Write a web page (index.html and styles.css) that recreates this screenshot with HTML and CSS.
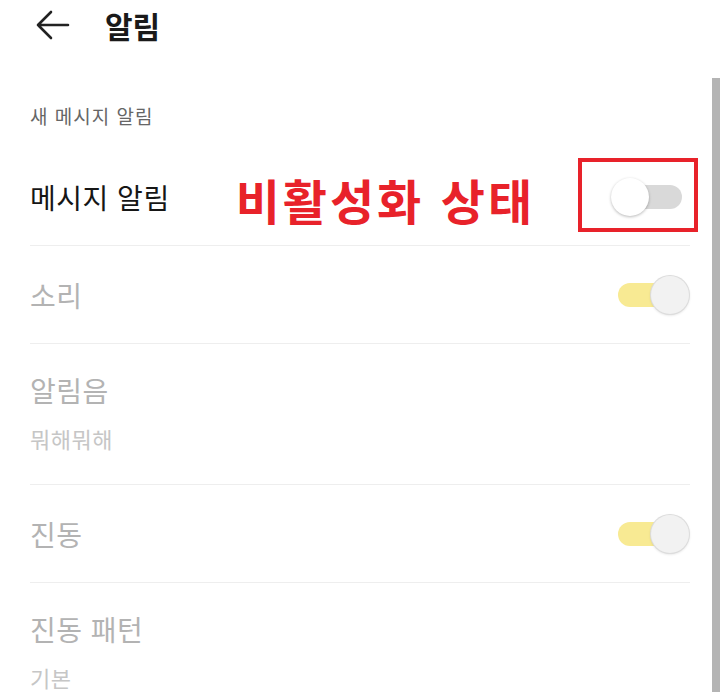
FILE: index.html
```html
<!DOCTYPE html>
<html lang="ko">
<head>
<meta charset="utf-8">
<title>알림</title>
<link rel="stylesheet" href="styles.css">
</head>
<body>
<div class="screen">
  <header class="topbar">
    <svg class="back" width="34" height="30" viewBox="0 0 34 30" aria-hidden="true">
      <path d="M2 15 H32 M15 2 L2 15 L15 28" fill="none" stroke="#222" stroke-width="2.6" stroke-linecap="round" stroke-linejoin="round"/>
    </svg>
    <h1 class="title">알림</h1>
  </header>

  <div class="section-label">새 메시지 알림</div>

  <ul class="list">
    <li class="row">
      <span class="label">메시지 알림</span>
      <span class="annotation">비활성화 상태</span>
      <span class="toggle off">
        <span class="track"></span>
        <span class="knob"></span>
        <span class="mark"></span>
      </span>
    </li>
    <li class="row disabled">
      <span class="label">소리</span>
      <span class="toggle on">
        <span class="track"></span>
        <span class="knob"></span>
      </span>
    </li>
    <li class="row multi disabled">
      <div class="texts">
        <span class="label">알림음</span>
        <span class="sub">뭐해뭐해</span>
      </div>
    </li>
    <li class="row disabled">
      <span class="label">진동</span>
      <span class="toggle on">
        <span class="track"></span>
        <span class="knob"></span>
      </span>
    </li>
    <li class="row multi disabled last">
      <div class="texts">
        <span class="label">진동 패턴</span>
        <span class="sub">기본</span>
      </div>
    </li>
  </ul>

  <div class="scrollbar"></div>
</div>
</body>
</html>
```

FILE: styles.css
```css
html, body {
  margin: 0;
  padding: 0;
  background: #ffffff;
}

body {
  font-family: "Noto Sans CJK KR", "Noto Sans", sans-serif;
  overflow: hidden;
}

.screen {
  position: relative;
  width: 720px;
  height: 692px;
  overflow: hidden;
}

.topbar {
  height: 50px;
  display: flex;
  align-items: center;
  padding-left: 36px;
}

.back {
  display: block;
}

.title {
  margin: 0 0 0 35px;
  font-size: 30px;
  font-weight: 700;
  color: #1a1a1a;
  line-height: 40px;
}

.section-label {
  padding: 52px 30px 18px;
  font-size: 19px;
  line-height: 28px;
  color: #666666;
  letter-spacing: 1px;
}

.list {
  list-style: none;
  margin: 0;
  padding: 0 30px;
}

.row {
  display: flex;
  align-items: center;
  min-height: 97px;
  border-bottom: 1px solid #eeeeee;
}

.row.last {
  border-bottom: none;
}

.row.multi {
  padding: 28px 0 35px;
  min-height: 0;
}

.texts {
  display: flex;
  flex-direction: column;
  gap: 19px;
}

.label {
  font-size: 28px;
  line-height: 36px;
  color: #161616;
  letter-spacing: 0.5px;
}

.row.disabled .label {
  color: #b3b3b3;
}

.sub {
  font-size: 22px;
  line-height: 22px;
  color: #c6c6c6;
  letter-spacing: 0.5px;
}

.annotation {
  margin-left: 66px;
  margin-top: 4px;
  font-size: 48px;
  font-weight: 700;
  line-height: 50px;
  letter-spacing: 3px;
  color: #e8222a;
}

.toggle {
  position: relative;
  margin-left: auto;
  margin-right: 1px;
  width: 78px;
  height: 40px;
  display: flex;
  align-items: center;
}

.track {
  display: block;
  width: 64px;
  height: 24px;
  margin: 0 7px;
  border-radius: 12px;
  background: #d9d9d9;
}

.toggle.on .track {
  background: #f8ea93;
}

.knob {
  position: absolute;
  top: 1px;
  width: 38px;
  height: 38px;
  border-radius: 50%;
  background: #ffffff;
  box-shadow: 0 1px 3px rgba(0, 0, 0, 0.28);
}

.toggle.off .knob {
  left: 0;
}

.toggle.on .knob {
  right: 0;
  background: #f2f2f2;
  box-shadow: 0 0 0 1px #dcdcdc, 0 1px 3px rgba(0, 0, 0, 0.18);
}

.mark {
  position: absolute;
  left: -33px;
  right: -9px;
  top: -19px;
  bottom: -15px;
  border: 4px solid #e8222a;
}

.scrollbar {
  position: absolute;
  right: 0;
  top: 78px;
  bottom: 0;
  width: 8px;
  background: #b4b4b4;
}
```
